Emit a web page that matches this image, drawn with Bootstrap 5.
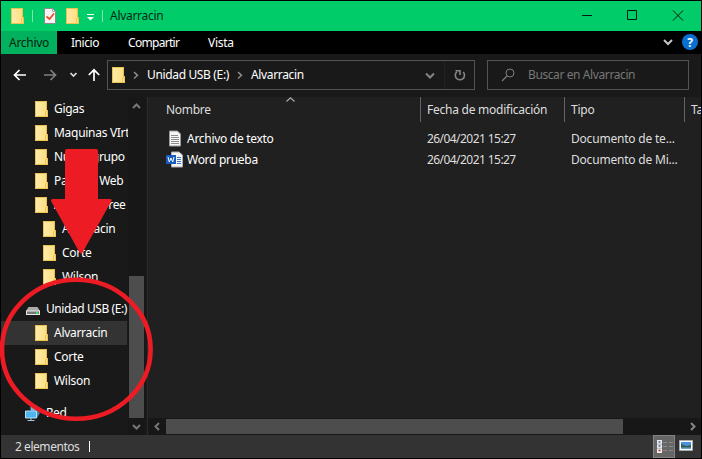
<!DOCTYPE html>
<html lang="es">
<head>
<meta charset="utf-8">
<meta name="viewport" content="width=device-width, initial-scale=1">
<title>Alvarracin</title>
<link href="https://cdn.jsdelivr.net/npm/bootstrap@5.3.0/dist/css/bootstrap.min.css" rel="stylesheet">
<style>
html,body{height:100%}
body{margin:0;background:#000;font:12px/16px "Noto Sans","Open Sans",sans-serif;letter-spacing:-.29px;color:#fff;overflow:hidden}
svg{display:block;flex:none}
.window{width:702px;height:459px;padding:1px;white-space:nowrap}
.titlebar{height:30px;background:#00cc69;color:#052a17}
.titlebar .t-icons{padding-left:10px;width:103px}
.t-name{padding-left:6px}
.tabs{height:23px;background:#000}
.tabs span{line-height:24px}
.tabs .file-tab{width:56px;background:#02b15d;color:#04210f;text-align:center}
.tab-a{width:57px;margin-left:14px;letter-spacing:-.45px}
.tab-b{width:80px;letter-spacing:-.7px}
.addressbar{height:43px;background:#191919;padding:6px 12px 7px 12px}
.box{border:1px solid #535353;height:30px;background:#191919}
.pathbox{width:368px;margin-left:6px}
.pathbox span{letter-spacing:-.35px}
.searchbox{width:202px;margin-left:12px;color:#777;letter-spacing:-.4px}
.workspace{height:338px}
.tree{width:127px;flex:none;background:#191919}
.tree-row{height:24px;padding-left:34px;width:126px}
.tree-row svg{margin-right:6px}
.tree-row.deep{padding-left:42px}
.tree-row.top-node{padding-left:25px;letter-spacing:-.42px}
.tree-row.picked{background:#333}
.vscroll{width:17px;flex:none;background:#171717;padding-left:1px}
.vscroll .thumb{width:15px;height:142px;background:#4d4d4d}
.splitter{width:3px;flex:none;background:#191919;border-right:1px solid #2b2b2b}
.files{background:#202020;min-width:0}
.colhead{height:25px;color:#dedede}
.colhead>div{border-right:1px solid #636363;line-height:26px}
.colhead .c2{letter-spacing:-.25px}
.c1{width:273px;padding-left:18px}
.c2{width:144px;padding-left:6px}
.c3{width:120px;padding-left:6px;letter-spacing:-.2px}
.c4{padding-left:6px;border:0!important}
.filerow{height:21px}
.filerow .c2,.filerow .c3{color:#dedede}
.filerow .c2{letter-spacing:-.56px}
.filerow .c1 svg{margin-right:4px}
.hscroll{height:17px;background:#171717}
.hscroll .thumb{width:457px;height:15px;background:#4d4d4d}
.statusbar{height:23px;background:#333;padding-left:14px;color:#dedede}
.caret{width:1px;height:11px;background:#fff}
.count{width:74px;letter-spacing:-.45px}
.viewbtn{width:22px;height:23px;background:#666;border:1px solid #838383}
.marks{left:0;top:0;pointer-events:none}
</style>
<script src="https://cdn.jsdelivr.net/npm/bootstrap@5.3.0/dist/js/bootstrap.bundle.min.js"></script>
</head>
<body>
<svg width="0" height="0" class="position-absolute">
<defs>
<linearGradient id="fg" x2="1"><stop stop-color="#ffeaa8"/><stop offset="1" stop-color="#fddf83"/></linearGradient>
<symbol id="folder" viewBox="0 0 13 16"><path d="M0 0H12V9H13V16H0Z" fill="#e9c251"/><path d="M1 1H11V10L10 11V15H1Z" fill="url(#fg)"/><path d="M11 10.500h1V15h-1.500Z" fill="#ffe08a"/></symbol>
</defs>
</svg>
<div class="window position-relative">
  <header class="titlebar d-flex align-items-center">
    <div class="t-icons d-flex align-items-center">
      <svg width="13" height="16"><use href="#folder"/></svg>
      <svg width="20" height="16" viewBox="0 0 20 16"><path d="M8.500 2V14" stroke="#7be5ae"/></svg>
      <svg width="22" height="16" viewBox="0 0 22 16"><path d="M.5.5H8.500L11.500 3.500V15.500H.5Z" fill="#f4f4f4" stroke="#8a8a8a"/><path d="M8.500.5V3.500H11.500" fill="none" stroke="#aaa"/><path d="M2.500 8.500L5.500 11L10 5.500" fill="none" stroke="#e2501c" stroke-width="1.700"/></svg>
      <svg width="13" height="16"><use href="#folder"/></svg>
      <svg width="25" height="16" viewBox="0 0 25 16"><path d="M8 6.500h7" stroke="#fff"/><path d="M8 9h7l-3.500 3.500Z" fill="#fff"/><path d="M23.500 2V14" stroke="#7be5ae"/></svg>
    </div>
    <span class="t-name">Alvarracin</span>
    <svg class="ms-auto" width="119" height="30" viewBox="0 0 119 30" fill="none" stroke="#001b0c"><path d="M0 14.500H10"/><path d="M45.500 9.500h9v9h-9z"/><path d="M91 9.500L101 19.500M101 9.500L91 19.500"/></svg>
  </header>
  <nav class="tabs d-flex">
    <span class="file-tab">Archivo</span><span class="tab-a">Inicio</span><span class="tab-b">Compartir</span><span>Vista</span>
    <svg class="ms-auto" width="40" height="23" viewBox="0 0 40 23"><path d="M3 9l4 4l4-4" fill="none" stroke="#c4c4c4" stroke-width="2"/><circle cx="29" cy="11" r="8" fill="#0871d1"/><text x="29" y="15.500" text-anchor="middle" font-size="12" font-weight="700" fill="#fff">?</text></svg>
  </nav>
  <div class="addressbar d-flex">
    <svg width="88" height="30" viewBox="0 0 88 30" fill="none" stroke-width="1.700"><path d="M13 15H2M6.500 10L1.500 15L6.500 20" stroke="#fff"/><path d="M31 15H42M37.500 10L42.500 15L37.500 20" stroke="#808080"/><path d="M57.500 13l3 3l3-3" stroke="#ddd"/><path d="M81 21V10M75.800 15L81 9.800L86.200 15" stroke="#fff"/></svg>
    <div class="box pathbox d-flex align-items-center">
      <svg class="ms-1" width="13" height="16"><use href="#folder"/></svg>
      <svg width="22" height="16" viewBox="0 0 22 16"><path d="M9 5l3.500 3.300L9 11.500" fill="none" stroke="#888" stroke-width="1.600"/></svg>
      <span>Unidad USB (E:)</span>
      <svg width="22" height="16" viewBox="0 0 22 16"><path d="M9 5l3.500 3.300L9 11.500" fill="none" stroke="#888" stroke-width="1.600"/></svg>
      <span>Alvarracin</span>
      <svg class="ms-auto" width="50" height="28" viewBox="0 0 50 28" fill="none" stroke="#858585"><path d="M2 12.500l4 4l4-4" stroke-width="2"/><path d="M20.500 0V28" stroke="#222"/><path d="M39.200 11A4.600 4.600 0 1 1 33 10.600" stroke-width="1.600"/><path d="M35 9.800H39.500V14" stroke-width="1.600" transform="translate(-3.500 0)"/></svg>
    </div>
    <div class="box searchbox d-flex align-items-center">
      <svg width="40" height="28" viewBox="0 0 40 28" fill="none" stroke="#7c7c7c"><circle cx="22" cy="12" r="4"/><path d="M19 15l-5 5" stroke-width="1.300"/></svg>
      <span>Buscar en Alvarracin</span>
    </div>
  </div>
  <main class="workspace d-flex">
    <aside class="tree">
      <div class="tree-row d-flex align-items-center"><svg width="13" height="16"><use href="#folder"/></svg>Gigas</div>
      <div class="tree-row d-flex align-items-center"><svg width="13" height="16"><use href="#folder"/></svg>Maquinas VIrt</div>
      <div class="tree-row d-flex align-items-center"><svg width="13" height="16"><use href="#folder"/></svg>Nuevo grupo</div>
      <div class="tree-row d-flex align-items-center"><svg width="13" height="16"><use href="#folder"/></svg>Paginas Web</div>
      <div class="tree-row d-flex align-items-center"><svg width="13" height="16"><use href="#folder"/></svg>Archivos Free</div>
      <div class="tree-row deep d-flex align-items-center"><svg width="13" height="16"><use href="#folder"/></svg>Alvarracin</div>
      <div class="tree-row deep d-flex align-items-center"><svg width="13" height="16"><use href="#folder"/></svg>Corte</div>
      <div class="tree-row deep d-flex align-items-center"><svg width="13" height="16"><use href="#folder"/></svg>Wilson</div>
      <div class="tree-row top-node mt-2 d-flex align-items-center"><svg width="14" height="16" viewBox="0 0 14 16"><path d="M2.500 6H11.500L14 10H0Z" fill="#aaa"/><path d="M0 9.500H14V14H0Z" fill="#e8e8e8"/><path d="M1 10.500H13V13H1Z" fill="#777"/><path d="M10 11h2v2h-2z" fill="#33e45c"/></svg>Unidad USB (E:)</div>
      <div class="tree-row picked d-flex align-items-center"><svg width="13" height="16"><use href="#folder"/></svg>Alvarracin</div>
      <div class="tree-row d-flex align-items-center"><svg width="13" height="16"><use href="#folder"/></svg>Corte</div>
      <div class="tree-row d-flex align-items-center"><svg width="13" height="16"><use href="#folder"/></svg>Wilson</div>
      <div class="tree-row top-node mt-2 d-flex align-items-center"><svg width="14" height="16" viewBox="0 0 14 16" overflow="visible"><path d="M4 2l7-2v5l3 3-3 5H6Z" fill="#3f86b5"/><path d="M5 2.500l5-1.500v4H5Z" fill="#7fb9db"/><path d="M-.5 6H10.500V13H-.5Z" fill="#4fb5ee" stroke="#b9dff2"/><path d="M5 13v2M1.500 15.500h7" stroke="#9bc8de"/></svg>Red</div>
    </aside>
    <div class="vscroll d-flex flex-column">
      <svg width="15" height="179" viewBox="0 0 15 179"><path d="M4 11l3.500-3.500L11 11" fill="none" stroke="#777" stroke-width="2"/></svg>
      <div class="thumb"></div>
      <svg width="15" height="17" viewBox="0 0 15 17"><path d="M4 7l3.500 3.500L11 7" fill="none" stroke="#777" stroke-width="2"/></svg>
    </div>
    <div class="splitter"></div>
    <section class="files flex-grow-1 d-flex flex-column overflow-hidden">
      <div class="colhead d-flex">
        <div class="c1 d-flex flex-shrink-0"><span>Nombre</span><svg class="ms-auto" width="136" height="8" viewBox="0 0 136 8"><path d="M2.500 4.500L6.500.8L10.500 4.500" fill="none" stroke="#aaa" stroke-width="1.200"/></svg></div>
        <div class="c2 flex-shrink-0">Fecha de modificación</div><div class="c3 flex-shrink-0">Tipo</div><div class="c4 flex-shrink-0">Ta</div>
      </div>
      <div class="filerow mt-1 pt-1 d-flex align-items-center">
        <div class="c1 d-flex align-items-center"><svg width="17" height="17" viewBox="0 0 17 17"><path d="M3.500 1H11.500L14.500 4V16H3.500Z" fill="#f6f6f6" stroke="#999"/><path d="M5 5.500h7M5 7.500h8M5 9.500h8M5 11.500h8M5 13.500h8" stroke="#8c8c8c"/></svg>Archivo de texto</div>
        <div class="c2">26/04/2021 15:27</div><div class="c3">Documento de te...</div>
      </div>
      <div class="filerow pt-1 d-flex align-items-center">
        <div class="c1 d-flex align-items-center"><svg width="17" height="17" viewBox="0 0 17 17"><path d="M5.500 1H13L16.500 4V16H5.500Z" fill="#f6f6f6" stroke="#aaa"/><path d="M11 6.500h4M11 8.500h4M11 10.500h4M11 12.500h4" stroke="#3a75c4"/><path d="M0 4h10v9H0z" fill="#185abd"/><path d="M2 6l1.300 5L5 7l1.700 4L8 6" fill="none" stroke="#fff"/></svg>Word prueba</div>
        <div class="c2">26/04/2021 15:27</div><div class="c3">Documento de Mi...</div>
      </div>
      <div class="hscroll mt-auto d-flex align-items-center">
        <svg width="18" height="17" viewBox="0 0 18 17"><path d="M11 5L7.500 8.500L11 12" fill="none" stroke="#777" stroke-width="2"/></svg>
        <div class="thumb"></div>
        <svg class="ms-auto" width="16" height="17" viewBox="0 0 16 17"><path d="M6 5l3.500 3.500L6 12" fill="none" stroke="#888" stroke-width="2"/></svg>
      </div>
    </section>
  </main>
  <footer class="statusbar d-flex align-items-center">
    <span class="count">2 elementos</span><div class="caret"></div>
    <div class="viewbtn ms-auto"><svg width="20" height="21" viewBox="0 0 20 21"><path d="M3 4h5v13H3z" fill="#eee"/><path d="M4.500 6h2M4.500 10h2" stroke="#3d70a8" stroke-width="1.500"/><path d="M4.500 14.500h2" stroke="#b32929" stroke-width="1.500"/><path d="M3 8.200h5M3 12.300h5" stroke="#888" stroke-width=".6"/><path d="M9 6.500h4M15 6.500h4M9 10.500h4M15 10.500h4M9 14.500h4M15 14.500h4" stroke="#8a8a8a"/></svg></div>
    <svg width="26" height="23" viewBox="0 0 26 23"><path d="M4.500 5.500h13v10h-13z" fill="#fff" stroke="#aaa"/><path d="M6 7h10v4H6z" fill="#4c91dd"/><path d="M6 9l5 2 5-1v4H6z" fill="#315f50"/><path d="M6 12.500h10v1.500H6z" fill="#6da5cf"/></svg>
  </footer>
  <svg class="marks position-absolute" width="160" height="459" viewBox="0 0 160 459"><path d="M67 149H96Q98 149 98 151V199H110Q112.500 199 111.500 201L82.500 252.500Q81 254.500 79.500 252.500L51 201Q50.500 199 53 199H65V151Q65 149 67 149Z" fill="#ed1c24"/><ellipse cx="76.300" cy="349.300" rx="74.300" ry="69.500" fill="none" stroke="#ed1c24" stroke-width="4.600"/></svg>
</div>
</body>
</html>
